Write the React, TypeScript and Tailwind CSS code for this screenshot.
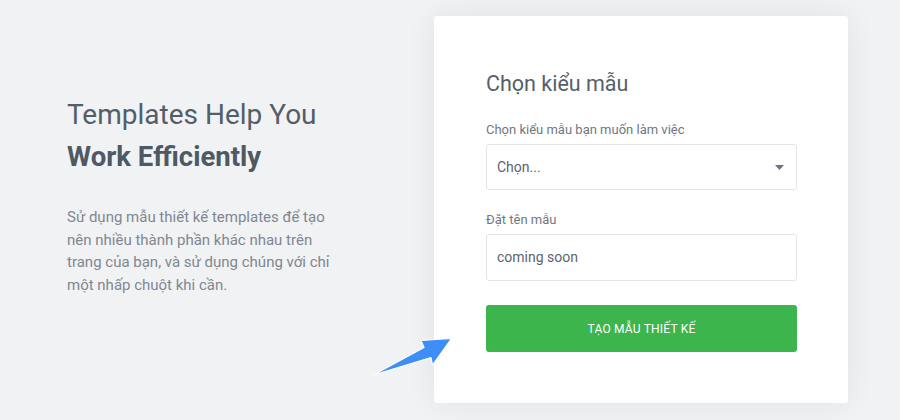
const font = { fontFamily: 'Roboto, "Noto Sans", Arial, sans-serif' };

function Field({ label, children }: { label: string; children: React.ReactNode }) {
  return (
    <div>
      <div className="text-[13px] leading-5 text-[#6f7882]">{label}</div>
      <div className="mt-1">{children}</div>
    </div>
  );
}

export default function App() {
  return (
    <div className="relative flex h-[420px] w-[900px] overflow-hidden bg-[#f1f2f4]" style={font}>
      <div className="w-[434px] shrink-0 pl-[67px] pt-[94px]">
        <h2 className="text-[28px] leading-[42px] text-[#535e69]">
          Templates Help You
          <br />
          <span className="text-[27.5px] font-bold text-[#4e5964]">Work Efficiently</span>
        </h2>
        <p className="mt-[28px] w-[280px] text-[15px] leading-[22.5px] text-[#7f8791]">
          Sử dụng mẫu thiết kế templates để tạo nên nhiều thành phần khác nhau trên trang của bạn, và sử dụng
          chúng với chỉ một nhấp chuột khi cần.
        </p>
      </div>

      <div className="mt-4 h-[387px] w-[414px] rounded-[3px] bg-white px-[51px] pt-[54px] shadow-[0_0_30px_rgba(20,30,50,0.07)]">
        <h3 className="pl-px text-[21.5px] leading-7 text-[#55606b]">Chọn kiểu mẫu</h3>

        <div className="mt-[22px] space-y-5 pl-px">
          <Field label="Chọn kiểu mẫu bạn muốn làm việc">
            <div className="flex h-[46px] items-center justify-between rounded-[3px] border border-[#e1e5ea] pl-[10px] pr-3 text-[14px] text-[#5b646e]">
              <span>Chọn...</span>
              <svg width="9" height="5" viewBox="0 0 9 5" className="text-[#6b7280]">
                <path d="M0 0h9L4.5 5z" fill="currentColor" />
              </svg>
            </div>
          </Field>

          <Field label="Đặt tên mẫu">
            <div className="flex h-[47px] items-center rounded-[3px] border border-[#e1e5ea] pl-[10px] text-[14px] text-[#5b646e]">
              coming soon
            </div>
          </Field>
        </div>

        <button
          type="button"
          className="mt-6 ml-px flex h-[47px] w-[311px] items-center justify-center rounded-[3px] bg-[#3bb54c] text-[12px] tracking-[0.2px] text-white"
        >
          TẠO MẪU THIẾT KẾ
        </button>
      </div>

      <svg className="pointer-events-none absolute left-0 top-0" width="900" height="420" viewBox="0 0 900 420">
        <polygon
          points="373.3,375 424,347.5 421,340.5 451.7,338.3 432.5,365 431,357.5"
          fill="#3d8ef8"
          stroke="#ffffff"
          strokeWidth="1.2"
          strokeLinejoin="round"
        />
      </svg>
    </div>
  );
}
